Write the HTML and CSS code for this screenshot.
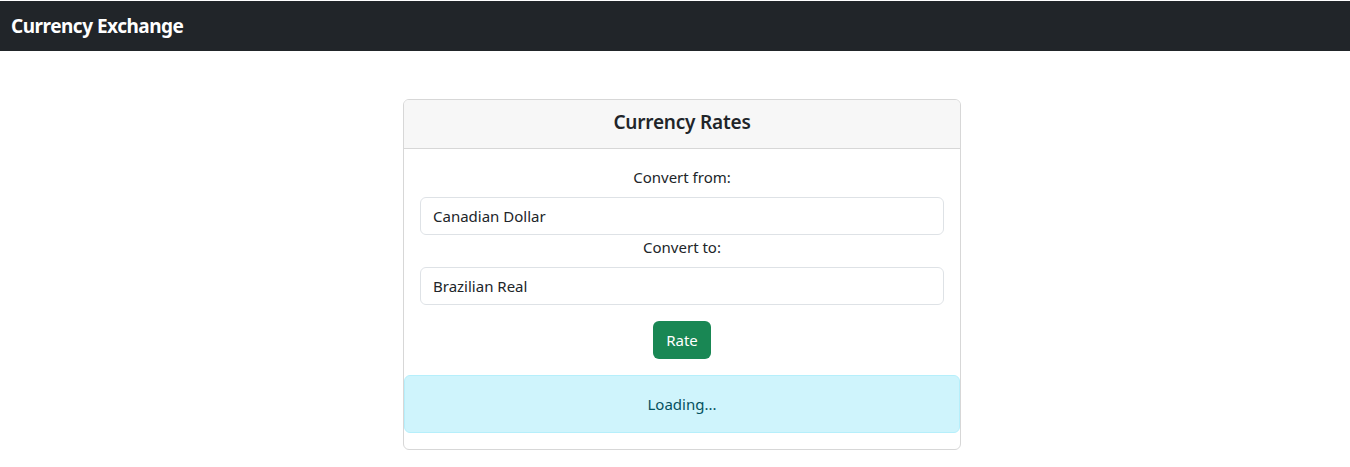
FILE: index.html
```html
<!DOCTYPE html>
<html>
<head>
<meta charset="utf-8">
<link rel="stylesheet" href="styles.css">
</head>
<body>
<nav class="navbar"><span class="brand">Currency Exchange</span></nav>
<main class="page">
  <section class="card">
    <header class="card-header">Currency Rates</header>
    <div class="card-body">
      <label class="label">Convert from:</label>
      <div class="input">Canadian Dollar</div>
      <label class="label">Convert to:</label>
      <div class="input">Brazilian Real</div>
      <div class="btn-row"><button class="btn">Rate</button></div>
      <div class="alert">Loading...</div>
    </div>
  </section>
</main>
</body>
</html>
```
FILE: styles.css
```css
* { box-sizing: border-box; }
body {
  margin: 0;
  padding-top: 1px;
  font-family: "Noto Sans", "Open Sans", sans-serif;
  font-size: 16px;
  line-height: 24px;
  color: #212529;
  background: #fff;
}
.navbar {
  height: 50px;
  background: #212529;
  display: flex;
  align-items: center;
  padding: 0 11px;
}
.brand {
  color: #fff;
  font-weight: 700;
  font-size: 19px;
  letter-spacing: -0.5px;
}
.page {
  padding-top: 48px;
  padding-left: calc(50% - 272px);
}
.card {
  width: 558px;
  border: 1px solid #d7d7d7;
  border-radius: 6px;
  overflow: hidden;
}
.card-header {
  height: 49px;
  padding-bottom: 5px;
  background: #f7f7f7;
  border-bottom: 1px solid #d7d7d7;
  display: flex;
  align-items: center;
  justify-content: center;
  font-weight: 600;
  font-size: 19px;
  letter-spacing: -0.2px;
}
.card-body {
  padding: 16px 16px 16px;
  display: flex;
  flex-direction: column;
}
.label {
  text-align: center;
  margin-bottom: 8px;
  font-size: 15px;
}
.input {
  height: 38px;
  border: 1px solid #dee2e6;
  border-radius: 6px;
  padding: 6px 12px;
  font-size: 15px;
}
.btn-row {
  display: flex;
  justify-content: center;
  margin-top: 16px;
}
.btn {
  height: 38px;
  width: 58px;
  border: none;
  border-radius: 6px;
  background: #198754;
  color: #fff;
  font-family: inherit;
  font-size: 15px;
  padding: 0;
}
.alert {
  margin: 16px -16px 0;
  height: 58px;
  background: #cff4fc;
  border: 1px solid #b6effb;
  border-radius: 6px;
  color: #055160;
  display: flex;
  align-items: center;
  justify-content: center;
  font-size: 15px;
}
```
